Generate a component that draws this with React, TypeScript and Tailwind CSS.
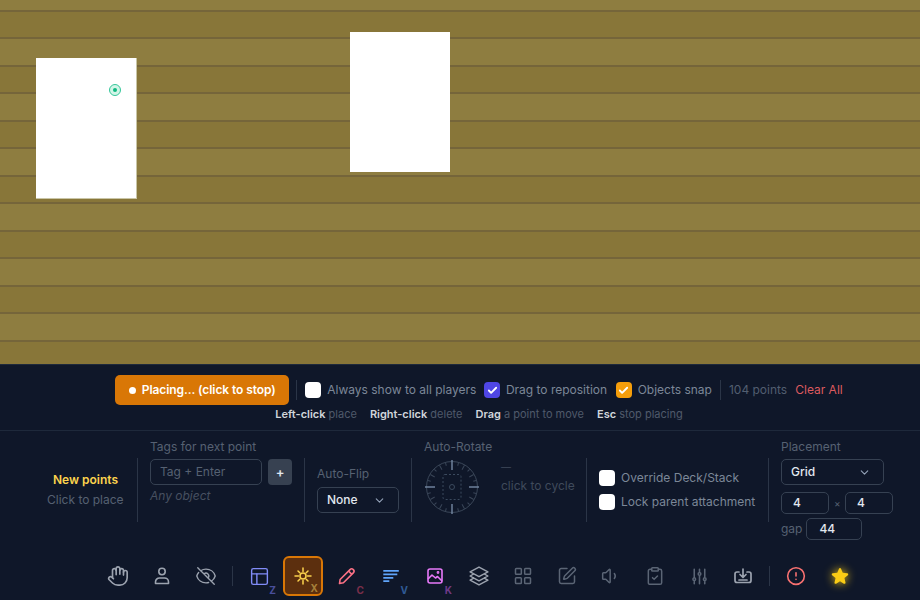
import {
  HiOutlineEyeSlash,
  HiOutlineSquare3Stack3D,
  HiOutlineAdjustmentsVertical,
  HiStar,
} from 'react-icons/hi2';
import {
  ChevronDown,
  PanelsTopLeft,
  Volume1,
  Check,
  Hand,
  LayoutGrid,
  SquarePen,
  ClipboardCheck,
  CircleAlert,
} from 'lucide-react';
import type { ReactNode } from 'react';

function Box({ checked, color }: { checked?: boolean; color?: string }) {
  return (
    <span
      className={`flex h-[16px] w-[16px] shrink-0 items-center justify-center rounded-[4px] ${color ?? 'bg-white'}`}
    >
      {checked && <Check size={11} strokeWidth={4} className="text-white" />}
    </span>
  );
}

function Divider({ className }: { className: string }) {
  return <div className={`w-px shrink-0 bg-[#2b3547] ${className}`} />;
}

function Dial() {
  const ticks = Array.from({ length: 24 }, (_, i) => i * 15);
  return (
    <svg width="54" height="54" viewBox="0 0 54 54" className="mt-[1px] shrink-0">
      <circle cx="27" cy="27" r="25.5" fill="none" stroke="#3a4658" strokeWidth="1" />
      {ticks.map((a) => {
        const major = a % 90 === 0;
        const mid = a % 30 === 0;
        return (
          <line
            key={a}
            x1="27"
            y1={major ? 0 : 2}
            x2="27"
            y2={major ? 10 : mid ? 7 : 5}
            stroke={major ? '#6f829c' : '#3a4658'}
            strokeWidth={major ? 1.5 : 1}
            transform={`rotate(${a} 27 27)`}
          />
        );
      })}
      <rect x="18" y="14.5" width="18" height="25" rx="2" fill="none" stroke="#3b4a5e" strokeDasharray="2 2" />
      <circle cx="27" cy="27" r="2.5" fill="none" stroke="#3b4a5e" />
    </svg>
  );
}

function Tool({ children, hotkey, keyColor, active }: { children: ReactNode; hotkey?: string; keyColor?: string; active?: boolean }) {
  return (
    <div
      className={`relative flex h-[40px] w-[40px] items-center justify-center rounded-md ${
        active ? 'border-2 border-[#d97706] bg-[#5c2f0e]' : ''
      }`}
    >
      {children}
      {hotkey && (
        <span className={`absolute right-[3px] bottom-[0px] text-[10px] leading-[12px] font-bold ${keyColor}`}>{hotkey}</span>
      )}
    </div>
  );
}

export default function App() {
  return (
    <div className="flex h-[600px] w-[920px] flex-col overflow-hidden font-['Inter',sans-serif]">
      {/* table */}
      <div className="relative h-[364px] shrink-0 bg-[repeating-linear-gradient(180deg,#8e7d40_0px,#8e7d40_10px,#75653a_10px,#75653a_12px,#887639_12px,#887639_37px,#75653a_37px,#75653a_39px,#8e7d40_39px,#8e7d40_55px)]">
        <div className="absolute top-[58px] left-[36px] h-[141px] w-[101px] border-r border-b border-[#c9c5a6] bg-white">
          <span className="absolute top-[26px] left-[73px] flex h-[12px] w-[12px] items-center justify-center rounded-full border border-[#34c79a] bg-[#d3f5e8]">
            <span className="h-[4px] w-[4px] rounded-full bg-[#10b981]" />
          </span>
        </div>
        <div className="absolute top-[32px] left-[350px] h-[140px] w-[100px] bg-white" />
      </div>

      {/* panel */}
      <div className="flex min-h-0 flex-1 flex-col border-t border-[#1e293b] bg-[#0f1729] text-[#94a3b8]">
        <div className="flex flex-col items-center pt-[10px] pl-[38px]">
          <div className="flex h-[30px] items-center text-[12px] text-[#7c8798]">
            <div className="flex h-[30px] w-[174px] items-center justify-center gap-[6px] rounded-[5px] bg-[#d97706] text-[12px] font-semibold tracking-[-0.07px] text-white">
              <span className="h-[7px] w-[7px] rounded-full bg-white" />
              Placing... (click to stop)
            </div>
            <Divider className="mr-[8px] ml-[7px] h-[20px]" />
            <Box />
            <span className="mr-[8px] ml-[6px]">Always show to all players</span>
            <Box checked color="bg-[#4f46e5]" />
            <span className="mr-[8.5px] ml-[5.5px]">Drag to reposition</span>
            <Box checked color="bg-[#f59e0b]" />
            <span className="mr-[8px] ml-[6px]">Objects snap</span>
            <Divider className="h-[20px]" />
            <span className="mr-[8px] ml-[8px] text-[#525e70]">104 points</span>
            <span className="text-[#dc5a5f]">Clear All</span>
          </div>
          <div className="mt-[1px] flex h-[16px] items-center gap-[13px] text-[11px] text-[#4f5a6b]">
            <span><b className="font-semibold text-[#d1d5db]">Left-click</b> place</span>
            <span><b className="font-semibold text-[#d1d5db]">Right-click</b> delete</span>
            <span><b className="font-semibold text-[#d1d5db]">Drag</b> a point to move</span>
            <span><b className="font-semibold text-[#d1d5db]">Esc</b> stop placing</span>
          </div>
        </div>

        <div className="mt-[8px] flex h-[126px] border-t border-[#1e293b] pt-[8px] pl-[47px] text-[12px] leading-[16px] text-[#566172]">
          <div className="flex w-[78px] shrink-0 flex-col items-start pt-[33px]">
            <span className="w-[77px] text-center font-semibold text-[#fcd34d]">New points</span>
            <span className="mt-[4px] whitespace-nowrap">Click to place</span>
          </div>
          <Divider className="mx-[12px] mt-[19px] h-[64px]" />
          <div className="w-[142px] shrink-0">
            <div>Tags for next point</div>
            <div className="mt-[4px] flex gap-[6px]">
              <div className="flex h-[26px] w-[112px] items-center rounded-[5px] border border-[#364152] pl-[9px]">Tag + Enter</div>
              <div className="flex h-[26px] w-[24px] items-center justify-center rounded-[4px] bg-[#374151] text-[13px] font-semibold text-[#e2e8f0]">+</div>
            </div>
            <div className="mt-[3px] text-[#475060] italic">Any object</div>
          </div>
          <Divider className="mx-[12px] mt-[19px] h-[64px]" />
          <div className="w-[82px] shrink-0 pt-[27px]">
            <div>Auto-Flip</div>
            <div className="mt-[5px] flex h-[26px] w-[82px] items-center justify-between rounded-[5px] border border-[#364152] pr-[12px] pl-[9px] font-medium text-[#e2e8f0]">
              None
              <ChevronDown size={13} className="text-[#94a3b8]" />
            </div>
          </div>
          <Divider className="mx-[12px] mt-[19px] h-[64px]" />
          <div className="w-[150px] shrink-0">
            <div>Auto-Rotate</div>
            <div className="flex items-start gap-[22px] pt-[4px] pl-[1px]">
              <Dial />
              <div className="text-[#3f4a5b]">
                <div className="text-[10px]">—</div>
                <div className="mt-[3px] whitespace-nowrap">click to cycle</div>
              </div>
            </div>
          </div>
          <Divider className="mx-[12px] mt-[19px] h-[64px]" />
          <div className="flex w-[157px] shrink-0 flex-col gap-[8px] pt-[31px] text-[#7c8798]">
            <div className="flex items-center gap-[6px]"><Box /><span className="whitespace-nowrap">Override Deck/Stack</span></div>
            <div className="flex items-center gap-[6px]"><Box /><span className="whitespace-nowrap">Lock parent attachment</span></div>
          </div>
          <Divider className="mx-[12px] mt-[19px] h-[64px]" />
          <div className="shrink-0">
            <div>Placement</div>
            <div className="mt-[4px] flex h-[26px] w-[103px] items-center justify-between rounded-[5px] border border-[#364152] pr-[12px] pl-[9px] font-medium text-[#e2e8f0]">
              Grid
              <ChevronDown size={13} className="text-[#94a3b8]" />
            </div>
            <div className="mt-[7px] flex items-center gap-[5px]">
              <div className="flex h-[22px] w-[48px] items-center rounded-[5px] border border-[#364152] pl-[11px] font-medium text-[#e2e8f0]">4</div>
              <span className="w-[6px] text-center text-[10px]">×</span>
              <div className="flex h-[22px] w-[48px] items-center rounded-[5px] border border-[#364152] pl-[11px] font-medium text-[#e2e8f0]">4</div>
            </div>
            <div className="mt-[4px] flex items-center gap-[4px]">
              <span>gap</span>
              <div className="flex h-[22px] w-[56px] items-center rounded-[5px] border border-[#364152] pl-[12px] font-medium text-[#e2e8f0]">44</div>
            </div>
          </div>
        </div>

        {/* dock */}
        <div className="flex h-[40px] items-center justify-center gap-[4px] pl-[38px]">
          <Tool><Hand size={22} strokeWidth={1.8} className="text-[#9ca3af]" /></Tool>
          <Tool>
            <svg width="20" height="20" viewBox="0 0 20 20" fill="none" stroke="#9ca3af" strokeWidth="1.6" strokeLinejoin="round">
              <circle cx="10" cy="5.5" r="3.2" />
              <path d="M3.5 17.5v-1.5a4 4 0 0 1 4-4h5a4 4 0 0 1 4 4v1.500z" />
            </svg>
          </Tool>
          <Tool><HiOutlineEyeSlash size={22} className="text-[#9ca3af]" /></Tool>
          <Divider className="mx-[2px] h-[20px]" />
          <Tool hotkey="Z" keyColor="text-[#4a4f9c]"><PanelsTopLeft size={21} strokeWidth={1.6} className="text-[#818cf8]" /></Tool>
          <Tool active hotkey="X" keyColor="text-[#a6803a]">
            <svg width="20" height="20" viewBox="0 0 20 20" fill="none" stroke="#fcd34d" strokeWidth="1.5" strokeLinecap="round">
              <circle cx="10" cy="10" r="3" />
              <path d="M10 2v3.500M10 14.500V18M2 10h3.500M14.500 10H18M5 5l1.800 1.800M13.200 13.200L15 15M5 15l1.800-1.800M13.200 6.800L15 5" />
            </svg>
          </Tool>
          <Tool hotkey="C" keyColor="text-[#7a2f4a]">
            <svg width="20" height="20" viewBox="0 0 20 20" fill="none" stroke="#fb7185" strokeWidth="1.6" strokeLinejoin="round">
              <path d="M2.500 17.500l.6-4 9.900-9.900a2.300 2.300 0 0 1 3.300 3.300L6.400 16.800z" />
              <path d="M11.500 5l3.400 3.400" />
            </svg>
          </Tool>
          <Tool hotkey="V" keyColor="text-[#2f5a94]">
            <svg width="20" height="20" viewBox="0 0 20 20" fill="none" stroke="#60a5fa" strokeWidth="1.7">
              <path d="M2.300 4.800h15.500M2.300 8.300h14M2.300 11.800h10M2.300 15.200h6" />
            </svg>
          </Tool>
          <Tool hotkey="K" keyColor="text-[#6f3a88]">
            <svg width="20" height="20" viewBox="0 0 20 20" fill="none" stroke="#e879f9" strokeWidth="1.6" strokeLinejoin="round">
              <rect x="3" y="3" width="14" height="14" rx="2" />
              <path d="M3 13l4-4 3.500 3 2-1.500L17 15" />
              <circle cx="13" cy="6.500" r="0.600" />
            </svg>
          </Tool>
          <Tool><HiOutlineSquare3Stack3D size={22} className="text-[#9ca3af]" /></Tool>
          <Tool><LayoutGrid size={20} strokeWidth={1.8} className="text-[#5b6575]" /></Tool>
          <Tool><SquarePen size={20} strokeWidth={1.8} className="text-[#5b6575]" /></Tool>
          <Tool><Volume1 size={20} strokeWidth={1.8} className="text-[#5b6575]" /></Tool>
          <Tool><ClipboardCheck size={20} strokeWidth={1.8} className="text-[#5b6575]" /></Tool>
          <Tool><HiOutlineAdjustmentsVertical size={21} strokeWidth={1.8} className="text-[#5b6575]" /></Tool>
          <Tool>
            <svg width="20" height="20" viewBox="0 0 20 20" fill="none" stroke="#9ca3af" strokeWidth="1.7" strokeLinecap="round" strokeLinejoin="round">
              <path d="M6 6H4a2 2 0 0 0-2 2v6.500a2 2 0 0 0 2 2h12a2 2 0 0 0 2-2V8a2 2 0 0 0-2-2h-2" />
              <path d="M10 3v8M7 8.500l3 3 3-3M6 14h8" />
            </svg>
          </Tool>
          <Divider className="mx-[2px] h-[20px]" />
          <Tool><CircleAlert size={20} strokeWidth={1.9} className="text-[#f87171]" /></Tool>
          <Tool><HiStar size={20} className="text-[#facc15] drop-shadow-[0_0_5px_#facc15]" /></Tool>
        </div>
      </div>
    </div>
  );
}
